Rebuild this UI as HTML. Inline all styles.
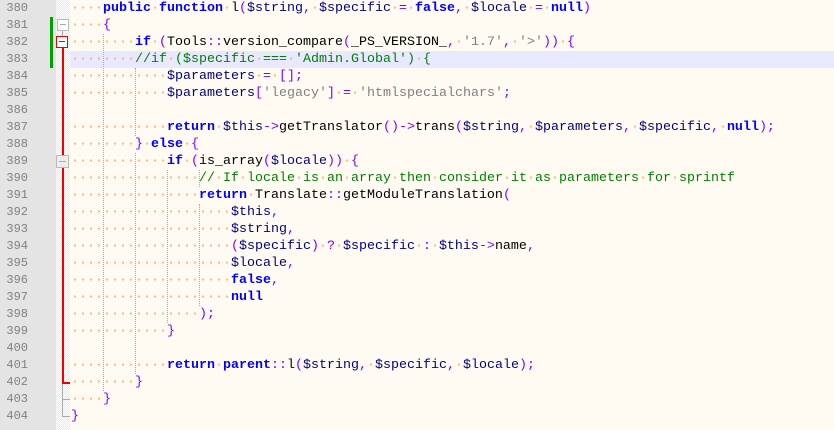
<!DOCTYPE html>
<html><head><meta charset="utf-8"><style>
body{margin:0;width:834px;height:430px;overflow:hidden;background:#fffbf3;position:relative;font-family:"Liberation Mono",monospace}
#mg{position:absolute;left:0;top:0;width:56px;height:430px;background:#e4e4e4}
#fold{position:absolute;left:56px;top:0;width:14px;height:430px;background-color:#fff;background-image:linear-gradient(45deg,#e8e8e8 25%,transparent 25%,transparent 75%,#e8e8e8 75%),linear-gradient(45deg,#e8e8e8 25%,transparent 25%,transparent 75%,#e8e8e8 75%);background-size:2px 2px;background-position:0 0,1px 1px}
.ln{position:absolute;left:0;width:28px;text-align:right;font-size:12px;color:#808080;line-height:17px}
.cl{position:absolute;left:71px;font-size:13.33px;line-height:17px;white-space:pre;color:#000}
i{font-style:normal;color:#ffa550}
.k{color:#0000ff;font-weight:bold}
.v{color:#000080}
.o{color:#8000ff}
.s{color:#808080}
.c{color:#008000}
.g{position:absolute;width:0;border-left:1px dotted #aaa}
</style></head><body>
<div id="mg"></div>
<div id="fold"></div>
<div style="position:absolute;left:70px;top:51px;width:764px;height:17px;background:#e8e8ff"></div>
<div style="position:absolute;left:50px;top:17px;width:3px;height:51px;background:#00a000"></div>
<!-- fold markers -->
<div style="position:absolute;left:62px;top:29px;width:1px;height:8px;background:#aaa"></div>
<div style="position:absolute;left:62px;top:46px;width:2px;height:337px;background:#e00"></div>
<div style="position:absolute;left:62px;top:382px;width:8px;height:2px;background:#e00"></div>
<div style="position:absolute;left:62px;top:384px;width:1px;height:32px;background:#aaa"></div>
<div style="position:absolute;left:62px;top:399px;width:8px;height:1px;background:#aaa"></div>
<div style="position:absolute;left:62px;top:416px;width:8px;height:1px;background:#aaa"></div>
<div style="position:absolute;left:57px;top:19px;width:10px;height:10px;border:1px solid #bbb;background:#fff"><div style="position:absolute;left:2px;top:4px;width:6px;height:1px;background:#aaa"></div></div>
<div style="position:absolute;left:56px;top:36px;width:10px;height:10px;border:1px solid #e00;background:#fff"><div style="position:absolute;left:2px;top:4px;width:6px;height:1px;background:#e00"></div></div>
<div style="position:absolute;left:56px;top:155px;width:11px;height:11px;border:1px solid #bbb;background:#eee"><div style="position:absolute;left:2px;top:5px;width:7px;height:1px;background:#aaa"></div></div>
<!-- guides -->
<div class="g" style="left:103px;top:34px;height:357px"></div>
<div class="g" style="left:135px;top:68px;height:68px"></div>
<div class="g" style="left:135px;top:153px;height:221px"></div>
<div class="g" style="left:167px;top:170px;height:153px"></div>
<div class="g" style="left:199px;top:170px;height:17px"></div>
<div class="g" style="left:199px;top:204px;height:102px"></div>

<div class="ln" style="top:0">380</div><div class="ln" style="top:17px">381</div><div class="ln" style="top:34px">382</div><div class="ln" style="top:51px">383</div><div class="ln" style="top:68px">384</div><div class="ln" style="top:85px">385</div><div class="ln" style="top:102px">386</div><div class="ln" style="top:119px">387</div><div class="ln" style="top:136px">388</div><div class="ln" style="top:153px">389</div><div class="ln" style="top:170px">390</div><div class="ln" style="top:187px">391</div><div class="ln" style="top:204px">392</div><div class="ln" style="top:221px">393</div><div class="ln" style="top:238px">394</div><div class="ln" style="top:255px">395</div><div class="ln" style="top:272px">396</div><div class="ln" style="top:289px">397</div><div class="ln" style="top:306px">398</div><div class="ln" style="top:323px">399</div><div class="ln" style="top:340px">400</div><div class="ln" style="top:357px">401</div><div class="ln" style="top:374px">402</div><div class="ln" style="top:391px">403</div><div class="ln" style="top:408px">404</div>

<div class="cl" style="top:0"><i>····</i><span class="k">public</span><i>·</i><span class="k">function</span><i>·</i>l<span class="o">(</span><span class="v">$string</span><span class="o">,</span><i>·</i><span class="v">$specific</span><i>·</i><span class="o">=</span><i>·</i><span class="k">false</span><span class="o">,</span><i>·</i><span class="v">$locale</span><i>·</i><span class="o">=</span><i>·</i><span class="k">null</span><span class="o">)</span></div>
<div class="cl" style="top:17px"><i>····</i><span class="o">{</span></div>
<div class="cl" style="top:34px"><i>········</i><span class="k">if</span><i>·</i><span class="o">(</span>Tools<span class="o">::</span>version_compare<span class="o">(</span>_PS_VERSION_<span class="o">,</span><i>·</i><span class="s">'1.7'</span><span class="o">,</span><i>·</i><span class="s">'&gt;'</span><span class="o">))</span><i>·</i><span class="o">{</span></div>
<div class="cl" style="top:51px"><i>········</i><span class="c">//if</span><i>·</i><span class="c">($specific</span><i>·</i><span class="c">===</span><i>·</i><span class="c">'Admin.Global')</span><i>·</i><span class="c">{</span></div>
<div class="cl" style="top:68px"><i>············</i><span class="v">$parameters</span><i>·</i><span class="o">=</span><i>·</i><span class="o">[];</span></div>
<div class="cl" style="top:85px"><i>············</i><span class="v">$parameters</span><span class="o">[</span><span class="s">'legacy'</span><span class="o">]</span><i>·</i><span class="o">=</span><i>·</i><span class="s">'htmlspecialchars'</span><span class="o">;</span></div>
<div class="cl" style="top:119px"><i>············</i><span class="k">return</span><i>·</i><span class="v">$this</span><span class="o">-&gt;</span>getTranslator<span class="o">()-&gt;</span>trans<span class="o">(</span><span class="v">$string</span><span class="o">,</span><i>·</i><span class="v">$parameters</span><span class="o">,</span><i>·</i><span class="v">$specific</span><span class="o">,</span><i>·</i><span class="k">null</span><span class="o">);</span></div>
<div class="cl" style="top:136px"><i>········</i><span class="o">}</span><i>·</i><span class="k">else</span><i>·</i><span class="o">{</span></div>
<div class="cl" style="top:153px"><i>············</i><span class="k">if</span><i>·</i><span class="o">(</span>is_array<span class="o">(</span><span class="v">$locale</span><span class="o">))</span><i>·</i><span class="o">{</span></div>
<div class="cl" style="top:170px"><i>················</i><span class="c">//</span><i>·</i><span class="c">If</span><i>·</i><span class="c">locale</span><i>·</i><span class="c">is</span><i>·</i><span class="c">an</span><i>·</i><span class="c">array</span><i>·</i><span class="c">then</span><i>·</i><span class="c">consider</span><i>·</i><span class="c">it</span><i>·</i><span class="c">as</span><i>·</i><span class="c">parameters</span><i>·</i><span class="c">for</span><i>·</i><span class="c">sprintf</span></div>
<div class="cl" style="top:187px"><i>················</i><span class="k">return</span><i>·</i>Translate<span class="o">::</span>getModuleTranslation<span class="o">(</span></div>
<div class="cl" style="top:204px"><i>····················</i><span class="v">$this</span><span class="o">,</span></div>
<div class="cl" style="top:221px"><i>····················</i><span class="v">$string</span><span class="o">,</span></div>
<div class="cl" style="top:238px"><i>····················</i><span class="o">(</span><span class="v">$specific</span><span class="o">)</span><i>·</i><span class="o">?</span><i>·</i><span class="v">$specific</span><i>·</i><span class="o">:</span><i>·</i><span class="v">$this</span><span class="o">-&gt;</span>name<span class="o">,</span></div>
<div class="cl" style="top:255px"><i>····················</i><span class="v">$locale</span><span class="o">,</span></div>
<div class="cl" style="top:272px"><i>····················</i><span class="k">false</span><span class="o">,</span></div>
<div class="cl" style="top:289px"><i>····················</i><span class="k">null</span></div>
<div class="cl" style="top:306px"><i>················</i><span class="o">);</span></div>
<div class="cl" style="top:323px"><i>············</i><span class="o">}</span></div>
<div class="cl" style="top:357px"><i>············</i><span class="k">return</span><i>·</i><span class="k">parent</span><span class="o">::</span>l<span class="o">(</span><span class="v">$string</span><span class="o">,</span><i>·</i><span class="v">$specific</span><span class="o">,</span><i>·</i><span class="v">$locale</span><span class="o">);</span></div>
<div class="cl" style="top:374px"><i>········</i><span class="o">}</span></div>
<div class="cl" style="top:391px"><i>····</i><span class="o">}</span></div>
<div class="cl" style="top:408px"><span class="o">}</span></div>
</body></html>
